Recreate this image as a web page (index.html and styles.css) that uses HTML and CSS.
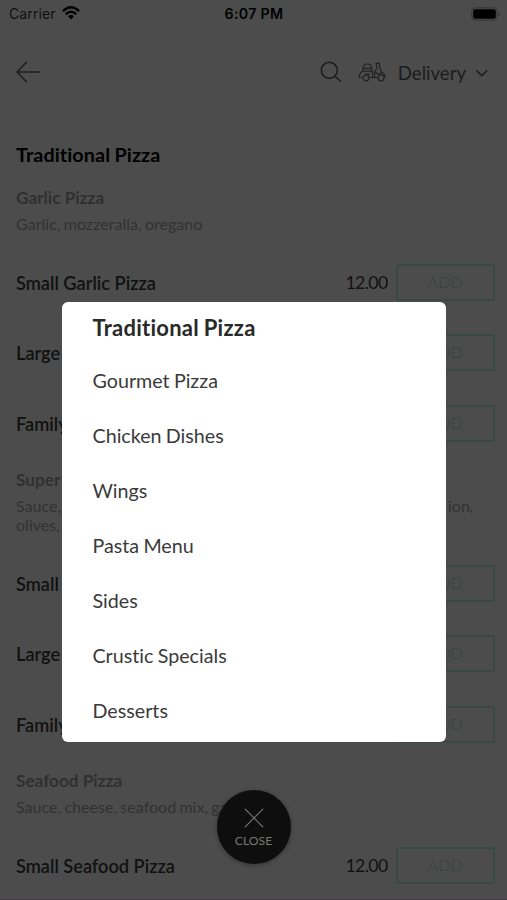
FILE: index.html
```html
<!DOCTYPE html>
<html lang="en">
<head>
<meta charset="utf-8">
<title>Menu</title>
<link rel="stylesheet" href="styles.css">
</head>
<body>
<div class="app">
  <header class="status">
    <div class="carrier"><span>Carrier</span>
      <svg width="18" height="14" viewBox="0 0 18 14"><g fill="none" stroke="#000" stroke-width="2.4"><path d="M.9 5.1Q9-2.6 17.1 5.1"/><path d="M3.8 8.2Q9 3.4 14.2 8.2"/></g><path d="M6 10.3Q9 7.8 12 10.3L9 13.6Z"/></svg>
    </div>
    <div class="time">6:07 PM</div>
    <svg class="battery" width="30" height="14" viewBox="0 0 30 14"><rect x=".8" y=".8" width="25.4" height="12.4" rx="3.4" fill="none" stroke="#353535"/><rect x="2.2" y="2.2" width="22.6" height="9.6" rx="2"/><path d="M27.5 5v4q1.6-.5 1.6-2t-1.6-2" fill="#353535"/></svg>
  </header>
  <nav class="nav">
    <svg class="back" width="26" height="22" viewBox="0 0 26 22" fill="none" stroke="#1c1c1c" stroke-width="1.4" stroke-linecap="round" stroke-linejoin="round"><path d="M24.5 11H2M11.5 1.3 2 11l9.5 9.7"/></svg>
    <svg class="search" width="22" height="22" viewBox="0 0 22 22" fill="none" stroke="#1c1c1c" stroke-width="1.5" stroke-linecap="round"><circle cx="9.3" cy="9.3" r="8"/><path d="m15.2 15.2 5 5"/></svg>
    <svg class="scooter" width="28" height="20" viewBox="0 0 28 20" fill="none" stroke="#222" stroke-width="1.2" stroke-linejoin="round" stroke-linecap="round"><path d="M5 9V6.5Q5.3 2 9.3 2t4.3 4.5V9M5 6.4h8.6M4.2 9.2h10.2M4.4 9.2Q1 11.5 1.2 15.5h3M14 9.2q1.3 2.4.6 5.4M12 15.5h8M16.6 14.5V9.4L19.2 6 18 1.3h3.6v4.5l2.2 4.4q3.2 1.5 3.4 5.3M16.6 9.4l3.6 3.2 3.6-2.4M7.5 12h4"/><circle cx="8" cy="15.8" r="3"/><circle cx="23" cy="15.8" r="3"/></svg>
    <span class="mode">Delivery</span>
    <svg class="chevron" width="14" height="9" viewBox="0 0 14 9" fill="none" stroke="#1c1c1c" stroke-width="1.5" stroke-linecap="round" stroke-linejoin="round"><path d="m1.8 1.7 5 5 5-5"/></svg>
  </nav>
  <main>
    <h1>Traditional Pizza</h1>
    <section>
      <div class="intro"><h2>Garlic Pizza</h2><p>Garlic, mozzeralla, oregano</p></div>
      <div class="row"><span class="name">Small Garlic Pizza</span><span class="price">12.00</span><span class="add">ADD</span></div>
      <div class="row"><span class="name">Large</span><span class="add">ADD</span></div>
      <div class="row"><span class="name">Family</span><span class="add">ADD</span></div>
    </section>
    <section>
      <div class="intro"><h2>Super</h2><p class="split"><span>Sauce,</span><span>ion,</span></p><p>olives,</p></div>
      <div class="row"><span class="name">Small</span><span class="add">ADD</span></div>
      <div class="row"><span class="name">Large</span><span class="add">ADD</span></div>
      <div class="row"><span class="name">Family</span><span class="add">ADD</span></div>
    </section>
    <section>
      <div class="intro"><h2>Seafood Pizza</h2><p>Sauce, cheese, seafood mix, garlic</p></div>
      <div class="row"><span class="name">Small Seafood Pizza</span><span class="price">12.00</span><span class="add">ADD</span></div>
    </section>
  </main>
</div>
<div class="overlay">
  <ul class="menu">
    <li class="current">Traditional Pizza</li>
    <li>Gourmet Pizza</li>
    <li>Chicken Dishes</li>
    <li>Wings</li>
    <li>Pasta Menu</li>
    <li>Sides</li>
    <li>Crustic Specials</li>
    <li>Desserts</li>
  </ul>
  <div class="close">
    <svg width="20" height="20" viewBox="0 0 20 20" fill="none" stroke="#777" stroke-width="1.2" stroke-linecap="round"><path d="m1.2 1.2 17.6 17.6M18.8 1.2 1.2 18.8"/></svg>
    <span>CLOSE</span>
  </div>
</div>
</body>
</html>
```
FILE: styles.css
```css
* { box-sizing: border-box; margin: 0; padding: 0; }
body { width: 507px; height: 900px; overflow: hidden; background: #4c4c4c; font-family: Lato, sans-serif; font-variant-ligatures: none; position: relative; }
svg { display: block; flex: none; }
.app { height: 900px; overflow: hidden; border-bottom: 1px solid #403b3e; }
.status { height: 28px; display: grid; grid-template-columns: 1fr auto 1fr; align-items: center; padding: 0 6px 0 9px; font: 14px/28px Inter, sans-serif; color: #111; }
.carrier { display: flex; align-items: center; gap: 6px; letter-spacing: .1px; }
.carrier svg { margin-top: -2px; }
.time { font-weight: 600; font-size: 14.2px; letter-spacing: .3px; color: #000; position: relative; left: -1px; }
.battery { justify-self: end; margin-top: -1px; }
.nav { height: 88px; display: flex; align-items: center; padding: 0 18px 0 15px; color: #1c1c1c; }
.search { margin-left: auto; margin-right: 16px; }
.mode { font-size: 18.6px; line-height: 24px; margin: 2px 9px 0 12px; }
.chevron { margin-top: 3px; }
main { padding: 0 12.5px 0 16px; }
h1 { font-size: 19.8px; line-height: 24px; height: 60.8px; padding-top: 26px; color: #000; word-spacing: -.5px; letter-spacing: .08px; }
.intro { padding: 10.8px 0 13.4px; color: #303030; }
h2 { font-size: 17.2px; line-height: 21px; margin-bottom: 6px; position: relative; top: -.5px; }
.intro p { font-size: 16px; line-height: 19px; color: #323232; position: relative; top: -1px; word-spacing: -.9px; letter-spacing: .03px; }
.intro .split { display: flex; justify-content: space-between; padding-right: 21px; }
.row { height: 70.6px; display: flex; align-items: center; font-size: 18.2px; color: #111; }
.name { font-weight: 600; margin-right: auto; padding-top: 1px; }
.price { margin-right: 8px; font-size: 17.6px; letter-spacing: -.6px; padding-top: 1px; }
.add { width: 99px; height: 37px; border: 2px solid #384943; border-radius: 3px; text-align: center; line-height: 32px; font-size: 16.5px; font-weight: 300; letter-spacing: -.2px; color: #39423b; }
.overlay { position: absolute; inset: 0; display: flex; flex-direction: column; align-items: center; padding-top: 301.5px; }
.menu { width: 384px; height: 440px; background: #fff; border-radius: 6px; list-style: none; padding-left: 31px; color: #3a3a3a; font-size: 19.7px; word-spacing: -.8px; }
.menu li { height: 55px; line-height: 54px; }
.menu .current { height: 52px; line-height: 52px; font-size: 22px; letter-spacing: .25px; font-weight: 700; color: #292929; }
.close { margin-top: 48.5px; width: 74px; height: 74px; border-radius: 50%; background: #0e0e0e; box-shadow: 0 1px 5px #0005; display: flex; flex-direction: column; align-items: center; padding-top: 18px; color: #777; font-size: 12.2px; line-height: 16px; gap: 5px; }
```
